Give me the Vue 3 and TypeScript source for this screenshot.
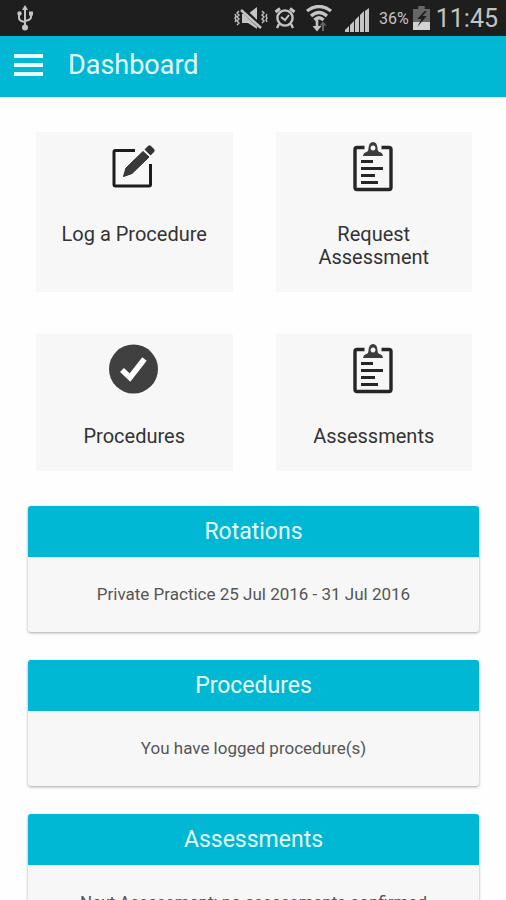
<script setup lang="ts">
interface Tile {
  label: string
  icon: 'edit' | 'clipboard' | 'check'
}

interface Panel {
  title: string
  body: string
}

const tiles: Tile[] = [
  { label: 'Log a Procedure', icon: 'edit' },
  { label: 'Request Assessment', icon: 'clipboard' },
  { label: 'Procedures', icon: 'check' },
  { label: 'Assessments', icon: 'clipboard' },
]

const panels: Panel[] = [
  { title: 'Rotations', body: 'Private Practice 25 Jul 2016 - 31 Jul 2016' },
  { title: 'Procedures', body: 'You have logged procedure(s)' },
  { title: 'Assessments', body: 'Next Assessment: no assessments confirmed' },
]
</script>

<template>
  <div class="app">
    <div class="status">
      <svg class="usb" width="16" height="26" viewBox="0 0 16 26" fill="none" stroke="#c4c4c4" stroke-width="2">
        <path d="M8 4V22M2 9v4q0 3 6 4M14 9v3q0 3-6 4" />
        <path d="M8 0l3 5H5z" fill="#c4c4c4" stroke="none" />
        <circle cx="8" cy="22.500" r="3" fill="#c4c4c4" stroke="none" />
        <circle cx="2.500" cy="8.500" r="2.200" fill="#c4c4c4" stroke="none" />
        <path d="M12 6.500h4v4h-4z" fill="#c4c4c4" stroke="none" />
      </svg>
      <div class="indicators">
        <svg width="34" height="24" viewBox="0 0 34 24" fill="none" stroke="#c4c4c4">
          <path d="M8 8h6l9-7v22l-9-6H8z" fill="#c4c4c4" stroke="none" />
          <path d="M7 2L28 22" stroke="#1e1e1e" stroke-width="5" />
          <path d="M7 4L27 22" stroke-width="2.600" />
          <path d="M5 5l-2 2 2 2-2 2 2 2-2 2 2 2-2 2M1 8l1 2-1 2 1 2-1 2M28 5l2 2-2 2 2 2-2 2 2 2-2 2M33 8l-1 2 1 2-1 2 1 2" stroke-width="1.400" />
        </svg>
        <svg class="alarm" width="22" height="24" viewBox="0 0 22 24" fill="none" stroke="#c4c4c4">
          <circle cx="11" cy="12" r="7.600" stroke-width="2.400" />
          <path d="M7 11l4 3 4-5" stroke-width="2" />
          <path d="M1.500 6L6 2.500M20.500 6L16 2.500" stroke-width="3" />
          <path d="M5 18l-2 4M17 18l2 4" stroke-width="2.400" />
        </svg>
        <svg class="wifi" width="26" height="27" viewBox="0 0 26 27" fill="none" stroke="#c4c4c4">
          <path d="M1 6Q13-3 25 6M5 11Q13 4 21 11M8.500 15Q13 10.500 17.500 15" stroke-width="3.400" />
          <path d="M11 15v9" stroke-width="2.600" />
          <path d="M6.500 21h9L11 26.500z" fill="#c4c4c4" stroke="none" />
          <path d="M17 26v-7" stroke="#666" stroke-width="2" />
          <path d="M13.500 20.500l3.500-4 3.500 4z" fill="#666" stroke="none" />
        </svg>
        <svg class="signal" width="24" height="24" viewBox="0 0 24 24" fill="#c4c4c4">
          <path d="M0 24v-2l4-4v6zM5 24v-7l4-4v11zM10 24V12l4-4v16zM15 24V7l4-4v21zM20 24V3l4-3v24z" />
        </svg>
        <span class="percent">36%</span>
        <svg class="battery" width="17" height="24" viewBox="0 0 16 24" preserveAspectRatio="none">
          <path d="M5 0h6v3h5v21H0V3h5z" fill="#666" />
          <path d="M0 16h16v8H0z" fill="#d2d2d2" />
          <path d="M11 5L4 13h4l-4 8 9-11H9l4-5z" fill="#1e1e1e" />
        </svg>
        <span class="clock">11:45</span>
      </div>
    </div>

    <header class="bar">
      <button class="menu" type="button" aria-label="Menu">
        <svg width="29" height="22" viewBox="0 0 29 22" fill="#e8fbfd">
          <path d="M0 0h29v4H0zM0 9h29v4H0zM0 18h29v4H0z" />
        </svg>
      </button>
      <h1>Dashboard</h1>
    </header>

    <main>
      <nav class="tiles">
        <a v-for="tile in tiles" :key="tile.label" class="tile" href="#">
          <svg v-if="tile.icon === 'edit'" width="52" height="52" viewBox="0 0 52 52">
            <path d="M27 9.500H7.500Q6 9.500 6 11V43.500Q6 45 7.500 45H41Q42.500 45 42.500 43.500V23" fill="none" stroke="#1c1c1c" stroke-width="3" />
            <path d="M15.500 35.500L18 27 35 10.500 41 16 24 32.500z" fill="#3a3a3a" stroke="#2b2b2b" stroke-width="1" stroke-linejoin="round" />
            <path d="M36.500 8.500L40 5Q41.500 3.500 43 5L46 8Q47.500 9.500 46 11L42.500 14.500z" fill="#333" />
          </svg>
          <svg v-else-if="tile.icon === 'clipboard'" width="52" height="52" viewBox="0 0 52 52">
            <path d="M16.500 6.500H9Q7 6.500 7 8.500V46.500Q7 48.500 9 48.500H41Q43 48.500 43 46.500V8.500Q43 6.500 41 6.500H33.500" fill="none" stroke="#262626" stroke-width="3.400" />
            <path fill-rule="evenodd" d="M15 15Q15.500 11.500 18.500 11Q20.500 10.500 20.500 7Q21 1 25 1Q29 1 29.500 7Q29.500 10.500 31.500 11Q34.500 11.500 35 15zM25 4.500a2.500 2.500 0 1 0 .01 0z" fill="#3c3c3c" />
            <path d="M13 20.500h12M13 27.500h22M13 34.500h14M13 41.500h17" stroke="#262626" stroke-width="2.800" />
          </svg>
          <svg v-else width="52" height="52" viewBox="0 0 52 52">
            <circle cx="25.500" cy="26" r="24.500" fill="#404040" />
            <path d="M14 27L22 34.500 36.500 16" fill="none" stroke="#fff" stroke-width="5.600" />
          </svg>
          <span>{{ tile.label }}</span>
        </a>
      </nav>

      <section v-for="panel in panels" :key="panel.title" class="panel">
        <h2>{{ panel.title }}</h2>
        <p>{{ panel.body }}</p>
      </section>
    </main>
  </div>
</template>

<style>
body {
  background: #fefefe;
}
</style>

<style scoped>
.app {
  display: flex;
  flex-direction: column;
  height: 100vh;
  font-family: Roboto, "Liberation Sans", sans-serif;
}

.status {
  display: flex;
  flex: none;
  align-items: center;
  justify-content: space-between;
  height: 36px;
  padding: 0 8px 0 17px;
  background: #1e1e1e;
}

.indicators {
  display: flex;
  align-items: center;
  gap: 6px;
  color: #c4c4c4;
}

.wifi {
  margin-left: 4px;
}

.signal {
  margin: 4px 4px 0 7px;
}

.percent {
  font-size: 16px;
}

.battery {
  margin-left: -2px;
}

.clock {
  font-size: 25px;
}

.bar {
  display: flex;
  flex: none;
  align-items: center;
  gap: 25px;
  height: 61px;
  padding: 0 14px 4px;
  box-sizing: border-box;
  background: #00b8d4;
}

.menu {
  display: flex;
  padding: 0;
  border: 0;
  background: none;
}

h1 {
  margin: 0;
  color: #e8fbfd;
  font-size: 27px;
  font-weight: 400;
}

main {
  flex: 1;
  min-height: 0;
  padding: 35px 27px 28px 28px;
  overflow-y: auto;
  scrollbar-width: none;
}

.tiles {
  display: grid;
  grid-template-columns: 1fr 1fr;
  gap: 42px 43px;
  margin: 0 7px 35px 8px;
}

.tile {
  display: flex;
  flex-direction: column;
  align-items: center;
  gap: 30px;
  padding: 9px 20px 23px;
  background: #f7f7f7;
  color: #333;
  font-size: 20px;
  line-height: 23px;
  text-align: center;
  text-decoration: none;
}

.panel {
  margin-bottom: 28px;
  border-radius: 3px;
  background: #f7f7f7;
  box-shadow: 0 1px 3px rgba(0, 0, 0, 0.35);
  text-align: center;
}

h2 {
  margin: 0;
  border-radius: 3px 3px 0 0;
  background: #00b8d4;
  color: #e8fbfd;
  font-size: 23px;
  font-weight: 400;
  line-height: 51px;
}

p {
  margin: 0;
  color: #555;
  font-size: 17px;
  line-height: 75px;
}
</style>
